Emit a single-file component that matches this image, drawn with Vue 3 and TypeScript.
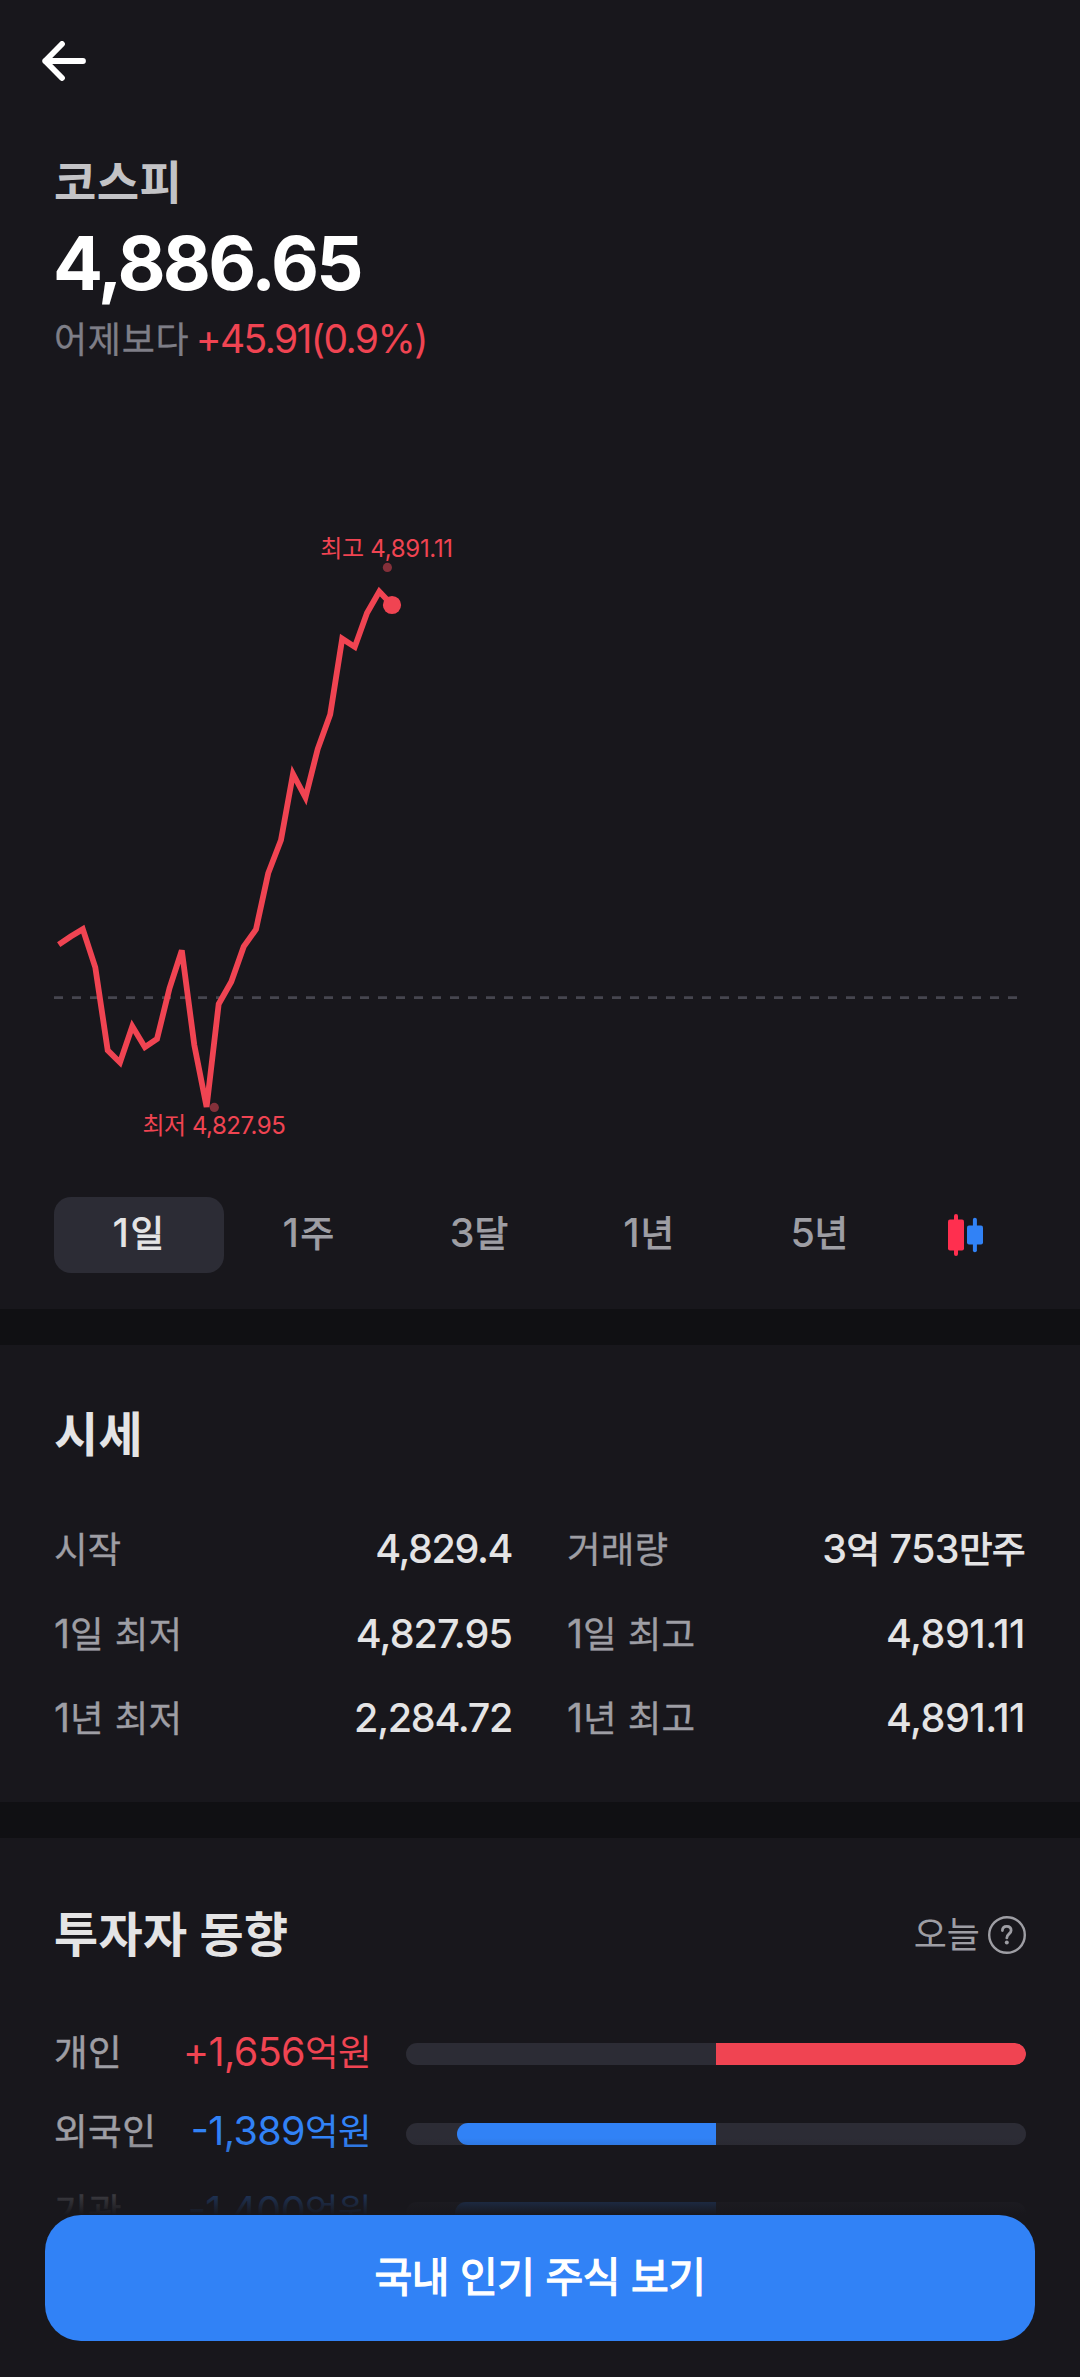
<script setup lang="ts">
import { h } from 'vue'
import type { FunctionalComponent } from 'vue'

// Sets Hangul runs slightly smaller than the digits around them.
const Mixed: FunctionalComponent<{ text: string; ls?: number }> = ({ text, ls }) =>
  h(
    'span',
    { style: ls ? { letterSpacing: ls + 'px' } : undefined },
    text
      .split(/([가-힣]+)/)
      .filter(Boolean)
      .map((part) => (/[가-힣]/.test(part) ? h('span', { class: 'ko' }, part) : part)),
  )
Mixed.props = ['text', 'ls']

interface Tab { label: string; ls: number }
const tabs: Tab[] = [
  { label: '1일', ls: 1.5 },
  { label: '1주', ls: 1.5 },
  { label: '3달', ls: 0 },
  { label: '1년', ls: 0.8 },
  { label: '5년', ls: -0.5 },
]
const active = '1일'

interface Quote { label: string; labelLs: number; value: string; ls: number }
const quotes: Quote[] = [
  { label: '시작', labelLs: 0, value: '4,829.4', ls: -1.4 },
  { label: '거래량', labelLs: 0.2, value: '3억 753만주', ls: -0.6 },
  { label: '1일 최저', labelLs: 0, value: '4,827.95', ls: -0.9 },
  { label: '1일 최고', labelLs: 0, value: '4,891.11', ls: -0.5 },
  { label: '1년 최저', labelLs: 0, value: '2,284.72', ls: -1.3 },
  { label: '1년 최고', labelLs: 0, value: '4,891.11', ls: -0.5 },
]

interface Investor { name: string; amount: string; side: 'buy' | 'sell'; share: number }
const investors: Investor[] = [
  { name: '개인', amount: '+1,656억원', side: 'buy', share: 100 },
  { name: '외국인', amount: '-1,389억원', side: 'sell', share: 83.5 },
  { name: '기관', amount: '-1,400억원', side: 'sell', share: 84.2 },
]

const points: [number, number][] = [
  [58.7, 944.7], [70.7, 936.5], [82.8, 929.2], [95.3, 967.3], [107.7, 1050.3], [120, 1062.5],
  [132.3, 1026.3], [144.9, 1047.2], [157, 1039], [169.5, 988.3], [181.8, 950.5], [194.3, 1045],
  [206.6, 1107], [218.7, 1004], [231.3, 981.7], [243.7, 946.7], [256, 929.3], [268.2, 873.3],
  [281, 840], [293, 774], [305.5, 797.5], [317.7, 749], [330.2, 714.5], [342.2, 638.7],
  [354.8, 646.9], [367, 613], [379.3, 591.5], [392, 605],
]
const line = points.map((p) => p.join(',')).join(' ')
</script>

<template>
  <div class="screen">
    <header class="nav">
      <svg width="44" height="40" viewBox="0 0 44 40" fill="none" stroke="#fff" stroke-width="5.8" stroke-linecap="round" stroke-linejoin="round">
        <path d="M20 3 3.2 20 20 37M3.2 20H41" />
      </svg>
    </header>

    <section class="summary">
      <h1 class="name">코스피</h1>
      <div class="price">4,886.65</div>
      <div class="change">
        <span class="since">어제보다</span>
        <span class="diff">+45.91(0.9%)</span>
      </div>
    </section>

    <svg class="chart" width="1080" height="830" viewBox="0 367 1080 830">
      <line x1="54" y1="997.6" x2="1019" y2="997.6" stroke="#46464f" stroke-width="2.6" stroke-dasharray="9 9" />
      <circle cx="387.4" cy="567.4" r="4.6" fill="#84303a" />
      <circle cx="214.3" cy="1107.4" r="4.6" fill="#84303a" />
      <polyline :points="line" fill="none" stroke="#f04452" stroke-width="5.8" />
      <circle cx="392" cy="605" r="9.1" fill="#f04452" />
      <text class="mark" x="320.3" y="556.6" letter-spacing="-0.3">최고 4,891.11</text>
      <text class="mark" x="142.5" y="1133.6" letter-spacing="-0.5">최저 4,827.95</text>
    </svg>

    <nav class="tabs">
      <button v-for="t in tabs" :key="t.label" type="button" class="tab" :class="{ on: t.label === active }">
        <Mixed :text="t.label" :ls="t.ls" />
      </button>
      <div class="candle">
        <svg width="36" height="42" viewBox="0 0 36 42">
          <g fill="#ff2f4f">
            <rect x="6" y="0" width="4" height="42" rx="2" />
            <rect x="0" y="5.5" width="16" height="31" rx="2" />
          </g>
          <g fill="#3182f6">
            <rect x="24.9" y="3.7" width="4" height="34.6" rx="2" />
            <rect x="19" y="11.5" width="16" height="19" rx="2" />
          </g>
        </svg>
      </div>
    </nav>

    <div class="divider" />

    <section class="quotes">
      <h2 class="title">시세</h2>
      <dl class="grid">
        <div v-for="q in quotes" :key="q.label" class="cell">
          <dt><Mixed :text="q.label" :ls="q.labelLs" /></dt>
          <dd><Mixed :text="q.value" :ls="q.ls" /></dd>
        </div>
      </dl>
    </section>

    <div class="divider" />

    <section class="trend">
      <div class="head">
        <h2 class="title">투자자 동향</h2>
        <div class="today">
          <span>오늘</span>
          <svg width="38" height="38" viewBox="0 0 38 38" fill="none" stroke="#9e9ea4">
            <circle cx="19" cy="19" r="17.8" stroke-width="2.4" />
            <path d="M14.4 14.6c0-2.6 1.8-4.2 4.4-4.2s4.3 1.7 4.3 4.1c0 3.3-4.3 3.6-4.3 7.4" stroke-width="2.8" stroke-linecap="round" />
            <circle cx="18.8" cy="26.6" r="2" fill="#9e9ea4" stroke="none" />
          </svg>
        </div>
      </div>
      <div v-for="v in investors" :key="v.name" class="row">
        <div class="who">
          <Mixed class="label" :text="v.name" :ls="0.5" />
          <Mixed :class="v.side" :text="v.amount" :ls="-0.6" />
        </div>
        <div class="bar">
          <div class="half left"><div v-if="v.side === 'sell'" class="fill blue" :style="{ width: v.share + '%' }" /></div>
          <div class="half"><div v-if="v.side === 'buy'" class="fill red" :style="{ width: v.share + '%' }" /></div>
        </div>
      </div>
    </section>

    <footer class="cta">
      <div class="fade" />
      <div class="dock">
        <button type="button" class="go">국내 인기 주식 보기</button>
      </div>
    </footer>
  </div>
</template>

<style>
body { margin: 0; background: #18171c; }
.ko { font-size: 0.925em; line-height: 1; font-weight: 400; }
</style>

<style scoped>
.screen {
  position: relative;
  width: 1080px;
  height: 2377px;
  overflow: hidden;
  background: #18171c;
  color: #e4e4e5;
  font-family: Inter, "Noto Sans CJK KR", sans-serif;
}
h1, h2, dl, dd { margin: 0; }
button { border: 0; padding: 0; background: none; font-family: inherit; }

.nav { display: flex; padding: 41px 42px 0; height: 152px; box-sizing: border-box; }

.summary { padding: 0 54px; }
.name { font-size: 46px; line-height: 60px; font-weight: 700; color: #c3c3c6; letter-spacing: 0.4px; }
.price { margin: 6px 0 0 -1px; font-size: 74px; line-height: 90px; font-weight: 700; color: #fff; letter-spacing: -2.83px; }
.change { display: flex; height: 56px; margin-top: 3px; line-height: 56px; font-size: 39px; }
.since { font-size: 36px; line-height: 58px; color: #7e7e87; letter-spacing: 0.7px; -webkit-text-stroke: 0.3px; }
.diff { color: #f04452; letter-spacing: -1.6px; margin-left: 6.5px; }

.chart { display: block; }
.mark { font-size: 24px; font-weight: 400; fill: #f04452; }

.tabs { display: flex; padding: 0 54px 36px; }
.tab {
  width: 170px;
  height: 76px;
  padding-bottom: 4px;
  border-radius: 17px;
  font-size: 39.5px;
  line-height: 56px;
  font-weight: 500;
  color: #9e9ea4;
}
.tab :deep(.ko) { -webkit-text-stroke: 1px; }
.on { background: #2c2c35; color: #e4e4e5; }
.candle { flex: 1; display: flex; align-items: center; justify-content: center; padding: 0 0 1px 2px; }

.divider { height: 36px; background: #101013; }

.title { font-size: 48px; line-height: 64px; font-weight: 700; letter-spacing: 0.4px; }

.quotes { padding: 58px 54px 56px; }
.grid { display: grid; grid-template-columns: 1fr 1fr; column-gap: 54px; row-gap: 28.5px; margin-top: 54px; }
.cell { display: flex; justify-content: space-between; height: 56px; line-height: 56px; font-size: 39.5px; }
dt { color: #9e9ea4; -webkit-text-stroke: 0.3px; }
dd { font-weight: 500; padding-right: 1px; }
dd :deep(.ko) { -webkit-text-stroke: 1px; }

.trend { padding: 65px 54px 0; }
.head { display: flex; justify-content: space-between; align-items: center; margin-bottom: 56.5px; }
.today { display: flex; align-items: center; gap: 8px; font-size: 36px; line-height: 56px; color: #9e9ea4; }
.row { display: flex; gap: 35px; height: 56px; margin-bottom: 23.5px; line-height: 56px; font-size: 39.5px; }
.who { width: 317px; display: flex; justify-content: space-between; white-space: nowrap; }
.label { color: #9e9ea4; -webkit-text-stroke: 0.5px; }
.buy { color: #f04452; }
.sell { color: #3182f6; font-feature-settings: "case"; }
.bar { flex: 1; display: flex; height: 22px; margin-top: 19.5px; border-radius: 11px; overflow: hidden; background: #2c2c35; }
.half { flex: 1; display: flex; }
.left { justify-content: flex-end; }
.red { background: #f04452; border-radius: 0 11px 11px 0; }
.blue { background: #3182f6; border-radius: 11px 0 0 11px; }

.cta { position: absolute; left: 0; right: 0; bottom: 0; }
.fade { height: 77px; background: linear-gradient(rgba(24, 23, 28, 0), #18171c); }
.dock { padding: 0 45px 36px; background: #18171c; }
.go {
  display: block;
  width: 100%;
  height: 126px;
  border-radius: 36px;
  background: #3182f6;
  color: #fff;
  font-size: 41px;
  line-height: 124px;
  padding-bottom: 2px;
  font-weight: 400;
  letter-spacing: -0.5px;
  -webkit-text-stroke: 1.3px #fff;
}
</style>
